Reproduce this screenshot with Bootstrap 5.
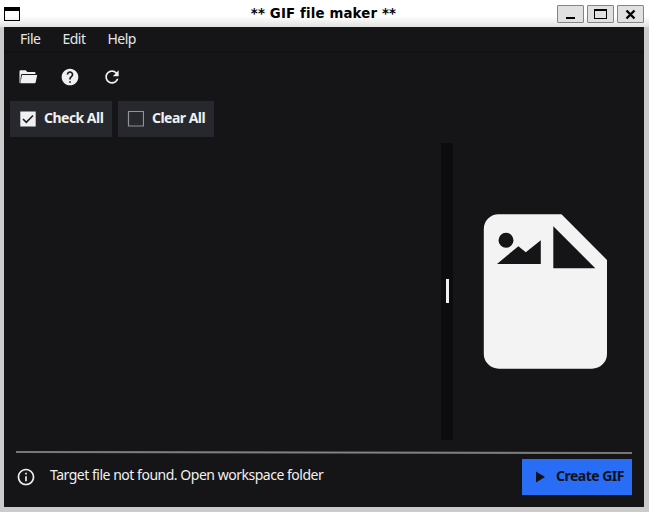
<!DOCTYPE html>
<html lang="en">
<head>
<meta charset="utf-8">
<title>** GIF file maker **</title>
<link href="https://cdn.jsdelivr.net/npm/bootstrap@5.3.0/dist/css/bootstrap.min.css" rel="stylesheet">
<style>
body{width:649px;height:512px;overflow:hidden;background:#cbcbcc;font-family:"Noto Sans",sans-serif;font-size:14px;line-height:20px;color:#f0f0f1}
svg{display:block;flex:none}
.titlebar{height:27px;background:linear-gradient(#fff 0,#fff 60%,#e2e2e2 100%);color:#000;padding:0 5px 0 4px}
.win-side{width:88px}
.win-title{font:bold 13.33px/26px "DejaVu Sans",sans-serif;letter-spacing:.15px;margin-left:-1px}
.win-controls{gap:3px}
.win-btn{width:27px;height:18px;background:#e1e1e1;border:1px solid #848484;border-radius:1px;padding:0}
.client{width:640px;height:480px;margin-left:4px;background:#151517}
.menubar{height:26px;padding-left:16px;gap:22px;background:linear-gradient(#151517 85%,#111113)}
.menubar a{color:#e6e6e7;text-decoration:none;line-height:23px;letter-spacing:-.5px}
.toolbar{height:48px;padding:0 0 0 14px;gap:22px}
.toolbar svg{width:20px;height:20px}
.flat{height:36px;border:0;border-radius:0;background:#27282e;color:#f0f0f1;font-weight:700;font-size:14px;line-height:20px;padding:0 0 0 8px;letter-spacing:-.52px;white-space:nowrap}
.flat:hover{background:#27282e;color:#f0f0f1}
.lbl{margin-top:-2px}
.check-all{width:102px}
.clear-all{width:96px}
.choices{padding-left:6px;gap:6px;height:36px}
.workspace{height:297px;margin-top:6px}
.files{width:437px}
.splitter{width:12px;background:#0c0c0e}
.grip{width:3px;height:24px;background:#f0f0f1;margin-left:1px;margin-bottom:1px}
.preview{padding:71px 0 0 30px}
.rule{margin:11px 0 0 12px}
.status{height:36px;padding:0 12px 0 12px;margin-top:5px}
.message{margin:-5px 0 0 14px;letter-spacing:-.48px}
.flat.create,.flat.create:hover{width:110px;background:#296df6;color:#101218}
</style>
<script src="https://cdn.jsdelivr.net/npm/bootstrap@5.3.0/dist/js/bootstrap.bundle.min.js"></script>
</head>
<body>
<header class="titlebar d-flex align-items-center justify-content-between">
  <div class="win-side"><svg width="16" height="14" viewBox="0 0 16 14"><path d="M0 0h16v14H0zM1 4v9h14V4z" fill="#000" fill-rule="evenodd"/></svg></div>
  <div class="win-title">** GIF file maker **</div>
  <div class="win-side win-controls d-flex justify-content-end">
    <button class="win-btn" aria-label="Minimize"><svg width="25" height="16"><path d="M8 11h9v2H8z"/></svg></button>
    <button class="win-btn" aria-label="Maximize"><svg width="25" height="16"><path d="M6 3h13v10H6zM7 5v7h11V5z" fill-rule="evenodd"/></svg></button>
    <button class="win-btn" aria-label="Close"><svg width="25" height="16"><path d="M8.500 4.500l8 8M16.500 4.500l-8 8" stroke="#000" stroke-width="2.3"/></svg></button>
  </div>
</header>
<main class="client">
  <nav class="menubar d-flex"><a href="#">File</a><a href="#">Edit</a><a href="#">Help</a></nav>
  <div class="toolbar d-flex align-items-center">
    <svg viewBox="0 0 20 20" fill="#f0f0f1"><path d="M1.500 16V4.500q0-1.200 1.200-1.200h5l1.600 1.700h7q1.200 0 1.200 1.200v.8H4.2q-1 0-1.200 1L2.200 15.500z"/><path d="M4 8h15.200l-1.600 7.500q-.2.8-1.1.8H2.300z"/></svg>
    <svg viewBox="0 0 24 24" fill="#f0f0f1"><path d="M12 2C6.48 2 2 6.48 2 12s4.480 10 10 10 10-4.480 10-10S17.520 2 12 2zm1 17h-2v-2h2v2zm2.070-7.750-.9.920C13.450 12.900 13 13.500 13 15h-2v-.5c0-1.100.45-2.100 1.170-2.830l1.240-1.260c.37-.36.590-.86.590-1.410 0-1.100-.9-2-2-2s-2 .9-2 2H8c0-2.210 1.790-4 4-4s4 1.790 4 4c0 .88-.36 1.680-.93 2.250z"/></svg>
    <svg viewBox="0 0 24 24" fill="#f0f0f1"><path d="M17.65 6.350C16.200 4.900 14.210 4 12 4c-4.420 0-7.990 3.580-7.990 8s3.570 8 7.990 8c3.730 0 6.840-2.550 7.730-6h-2.080c-.82 2.330-3.040 4-5.650 4-3.310 0-6-2.690-6-6s2.690-6 6-6c1.660 0 3.140.69 4.220 1.780L13 11h7V4l-2.350 2.350z"/></svg>
  </div>
  <div class="choices d-flex">
    <button class="btn flat check-all d-flex align-items-center"><svg class="me-2" width="18" height="20" viewBox="0 0 18 20"><path d="M2.300 2.500h15.400v15H2.300z" fill="#f0f0f1"/><path d="M5 10l3.300 3.400L15 6.500" fill="none" stroke="#222329" stroke-width="1.7"/></svg><span class="lbl">Check All</span></button>
    <button class="btn flat clear-all d-flex align-items-center"><svg class="me-2" width="18" height="20" viewBox="0 0 18 20"><path d="M2.500 2.500h15v14.500H2.500z" fill="none" stroke="#919297" stroke-width="1.200"/></svg><span class="lbl">Clear All</span></button>
  </div>
  <section class="workspace d-flex">
    <div class="files"></div>
    <div class="splitter d-flex align-items-center justify-content-center"><div class="grip"></div></div>
    <div class="preview"><svg width="125" height="156" viewBox="483 214 125 156"><path fill="#f3f3f3" fill-rule="evenodd" d="M498.500 214.200H561.500L607 260V353.700a15 15 0 0 1-15 15H498.800a15 15 0 0 1-15-15V229a14.800 14.800 0 0 1 14.700-14.800zM498.500 240.300a7.500 7.500 0 1 0 15 0a7.500 7.500 0 1 0-15 0zM497 263.900h43.800V240.300L525.800 252.200 518.400 246.200zM553.300 226.300V268.200H595.300z"/></svg></div>
  </section>
  <svg class="rule" width="616" height="3" viewBox="0 0 616 3"><path d="M0 0h110L616 1v2H500L0 2z" fill="#69696b"/><path d="M0 1L616 2" stroke="#858586" stroke-width="1"/></svg>
  <footer class="status d-flex align-items-center">
    <svg width="20" height="20" viewBox="0 0 24 24" fill="#f0f0f1"><path d="M11 7h2v2h-2zm0 4h2v6h-2zm1-9C6.480 2 2 6.480 2 12s4.480 10 10 10 10-4.480 10-10S17.520 2 12 2zm0 18c-4.410 0-8-3.590-8-8s3.590-8 8-8 8 3.590 8 8-3.590 8-8 8z"/></svg>
    <span class="message">Target file not found. Open workspace folder</span>
    <button class="btn flat create ms-auto d-flex align-items-center"><svg class="me-2" width="18" height="20" viewBox="0 0 18 20"><path d="M6 4.500v11l9-5.500z" fill="#101218"/></svg><span class="lbl">Create GIF</span></button>
  </footer>
</main>
</body>
</html>
